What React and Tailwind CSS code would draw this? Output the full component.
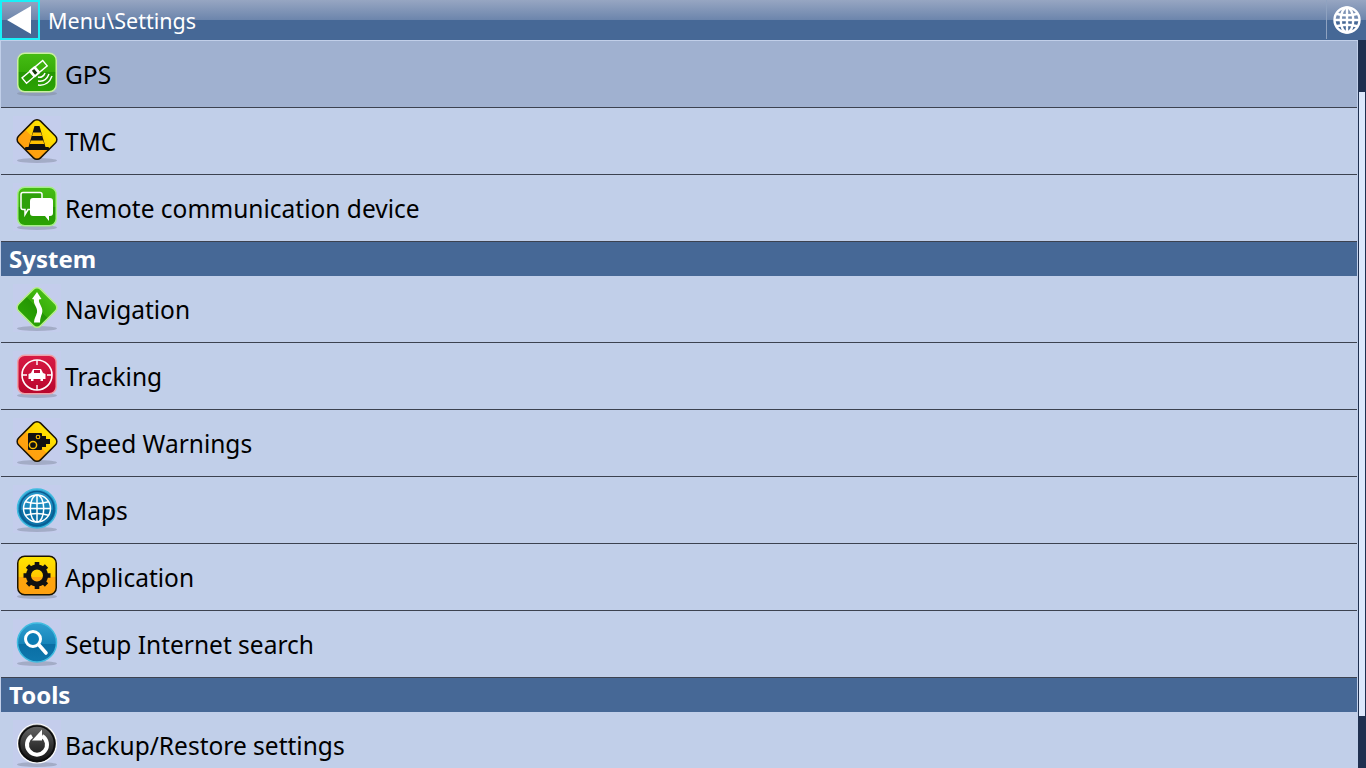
import React from "react";

const Frame = ({ children }) => (
  <svg width="48" height="48" viewBox="0 0 48 48" className="block">
    <defs>
      <linearGradient id="green" x1="0" y1="0" x2="0" y2="1">
        <stop offset="0" stopColor="#46bd14" />
        <stop offset="0.5" stopColor="#36ab08" />
        <stop offset="0.5" stopColor="#259604" />
        <stop offset="1" stopColor="#2ba404" />
      </linearGradient>
      <linearGradient id="yellow" x1="0" y1="0" x2="0" y2="1">
        <stop offset="0" stopColor="#ffe600" />
        <stop offset="0.55" stopColor="#ffc800" />
        <stop offset="0.55" stopColor="#ffa60c" />
        <stop offset="1" stopColor="#ffa010" />
      </linearGradient>
      <linearGradient id="red" x1="0" y1="0" x2="0" y2="1">
        <stop offset="0" stopColor="#d81a44" />
        <stop offset="1" stopColor="#b8062c" />
      </linearGradient>
      <linearGradient id="blue" x1="0" y1="0" x2="0" y2="1">
        <stop offset="0" stopColor="#2f9fd0" />
        <stop offset="0.55" stopColor="#1583b8" />
        <stop offset="0.55" stopColor="#0a6ea4" />
        <stop offset="1" stopColor="#0f78ae" />
      </linearGradient>
      <linearGradient id="dark" x1="0" y1="0" x2="0" y2="1">
        <stop offset="0" stopColor="#6a6a6a" />
        <stop offset="0.55" stopColor="#333" />
        <stop offset="1" stopColor="#111" />
      </linearGradient>
    </defs>
    <ellipse cx="24" cy="44.5" rx="20" ry="2.6" fill="#7d8498" opacity="0.45" />
    {children}
  </svg>
);

const RoundBox = ({ fill, stroke }) => (
  <rect x="4.75" y="4.25" width="38.5" height="38.5" rx="7" fill={fill} stroke={stroke} strokeWidth="1.5" />
);

const Diamond = ({ fill, stroke }) => (
  <rect x="8.5" y="8" width="31" height="31" rx="5" transform="rotate(45 24 23.5)" fill={fill} stroke={stroke} strokeWidth="1.5" />
);

const Globe = ({ cx, cy, r, color, sw }) => (
  <g fill="none" stroke={color} strokeWidth={sw}>
    <circle cx={cx} cy={cy} r={r} />
    <ellipse cx={cx} cy={cy} rx={r * 0.5} ry={r} />
    <path d={`M${cx} ${cy - r}V${cy + r}M${cx - r} ${cy}H${cx + r}`} />
    <path d={`M${cx - r * 0.85} ${cy - r * 0.5}Q${cx} ${cy - r * 0.25} ${cx + r * 0.85} ${cy - r * 0.5}M${cx - r * 0.85} ${cy + r * 0.5}Q${cx} ${cy + r * 0.25} ${cx + r * 0.85} ${cy + r * 0.5}`} />
  </g>
);

const GpsIcon = () => (
  <Frame>
    <RoundBox fill="url(#green)" stroke="#c9f0a0" />
    <g transform="rotate(-40 22 22.5)">
      <rect x="8" y="19" width="10" height="7" fill="none" stroke="#fff" strokeWidth="1.4" />
      <rect x="18" y="18" width="7" height="9" fill="#fff" />
      <rect x="20" y="20" width="3" height="5" fill="#14380a" />
      <rect x="25" y="19" width="10" height="7" fill="none" stroke="#fff" strokeWidth="1.4" />
    </g>
    <path d="M25 28c3 1 6-1 7-4M25 32c5 1 9-2 11-7M25 36c7 1 12-3 14-9" fill="none" stroke="#fff" strokeWidth="1.5" />
  </Frame>
);

const TmcIcon = () => (
  <Frame>
    <Diamond fill="url(#yellow)" stroke="#1c1400" />
    <path d="M21.5 10h5l6 21h-17z" fill="#111" />
    <path d="M20 16.5h8l1 3.5h-10zM17.8 24.5h12.4l1 3.5h-14.4z" fill="#ffc000" />
    <rect x="12" y="31" width="24" height="3" rx="1" fill="#111" />
  </Frame>
);

const RemoteIcon = () => (
  <Frame>
    <RoundBox fill="url(#green)" stroke="#a6ee88" />
    <path d="M10 9.5h17a2 2 0 0 1 2 2v13a2 2 0 0 1-2 2H15l-3 5v-5h-2a2 2 0 0 1-2-2v-13a2 2 0 0 1 2-2z" fill="#2ea10a" stroke="#fff" strokeWidth="1.5" />
    <path d="M20 15h17a3 3 0 0 1 3 3v12a3 3 0 0 1-3 3h-1v5l-4-5H20a3 3 0 0 1-3-3V18a3 3 0 0 1 3-3z" fill="#fff" />
  </Frame>
);

const NavIcon = () => (
  <Frame>
    <Diamond fill="url(#green)" stroke="#b5ee88" />
    <path d="M24 8l4.5 7-2.5.5c-1 4 5 8 3 14-1 3-2 5-2 9h-6c0-4 2-6 3-10 1-5-4-8-3-13l-2-.5z" fill="#fff" />
  </Frame>
);

const TrackIcon = () => (
  <Frame>
    <RoundBox fill="url(#red)" stroke="#f0a0a8" />
    <circle cx="24" cy="24" r="15" fill="none" stroke="#fff" strokeWidth="1.6" />
    <path d="M24 9v5M24 34v5M9 24h5M34 24h5" stroke="#fff" strokeWidth="1.4" />
    <path d="M15.5 28v-5l2.5-1 2-4h8l2 4 2.5 1v5h-2.5v2h-2.5v-2h-7v2h-2.5v-2z" fill="#fff" />
    <rect x="21" y="19" width="6" height="3" fill="#c0103a" />
  </Frame>
);

const SpeedIcon = () => (
  <Frame>
    <Diamond fill="url(#yellow)" stroke="#1c1400" />
    <rect x="15" y="15" width="14" height="17" rx="1" fill="#111" />
    <path d="M29 18h4v3h4v5h-4v3h-4z" fill="#111" />
    <circle cx="20" cy="27" r="3.6" fill="none" stroke="#ffc000" strokeWidth="1.5" />
    <circle cx="25" cy="19" r="1.8" fill="none" stroke="#ffc000" strokeWidth="1.1" />
  </Frame>
);

const MapsIcon = () => (
  <Frame>
    <circle cx="24" cy="23.5" r="19.5" fill="url(#blue)" stroke="#42bce0" strokeWidth="1.5" />
    <circle cx="24" cy="23.5" r="17" fill="none" stroke="#0a5c90" strokeWidth="1.5" />
    <Globe cx={24} cy={23.5} r={13.5} color="#fff" sw={1.5} />
  </Frame>
);

const AppIcon = () => (
  <Frame>
    <RoundBox fill="url(#yellow)" stroke="#1c1400" />
    <circle cx="24" cy="23.5" r="8.5" fill="none" stroke="#111" strokeWidth="5" />
    <g stroke="#111" strokeWidth="4.6">
      <path d="M24 10v6M24 31v6M10.5 23.5h6M31.5 23.5h6M14.5 14l4 4M29.5 29l4 4M33.5 14l-4 4M18.5 29l-4 4" />
    </g>
  </Frame>
);

const SearchIcon = () => (
  <Frame>
    <circle cx="24" cy="23.5" r="19.5" fill="url(#blue)" stroke="#42bce0" strokeWidth="1.5" />
    <circle cx="20" cy="20" r="7.5" fill="#0c7cb4" stroke="#fff" strokeWidth="3" />
    <path d="M26 26l7 8" stroke="#fff" strokeWidth="3.6" strokeLinecap="round" />
  </Frame>
);

const BackupIcon = () => (
  <Frame>
    <circle cx="24" cy="23.5" r="19.5" fill="url(#dark)" stroke="#fff" strokeWidth="1.2" />
    <circle cx="24" cy="23.5" r="17.5" fill="none" stroke="#0c0c0c" strokeWidth="1.5" />
    <path d="M19 16a10 10 0 1 0 10 0" fill="none" stroke="#fff" strokeWidth="4" />
    <path d="M29 9.5v11h-10z" fill="#fff" />
  </Frame>
);

const Row = ({ icon, label, active }) => (
  <div className={`flex h-[67px] ml-px border-b border-[#3c4250] ${active ? "bg-[#a0b1d0]" : "bg-[#c1cfe9]"}`}>
    <div className={`ml-[12px] mt-[8px] w-[48px] h-[48px] shrink-0 ${active ? "" : "bg-[#c4cdec]"}`}>{icon}</div>
    <span className="ml-[4px] text-[24.5px] leading-[68px] text-black whitespace-nowrap">{label}</span>
  </div>
);

const Section = ({ title }) => (
  <div className="h-[34px] ml-px bg-[#466896] text-white font-bold text-[24px] leading-[33px] pl-[8px]">
    {title}
  </div>
);

export default function App() {
  return (
    <div className="w-[1366px] h-[768px] overflow-hidden bg-[#c1cfe9]" style={{ fontFamily: '"Noto Sans", sans-serif' }}>
      <header className="flex h-[40px] bg-[linear-gradient(#97a6c2_0,#6c85ac_50%,#466896_50%,#466896_100%)]">
        <button className="w-[40px] h-[40px] border-2 border-[#19f0f8] flex items-center justify-center">
          <svg width="26" height="28" viewBox="0 0 26 28">
            <path d="M0 14L24 0v28z" fill="#fff" />
          </svg>
        </button>
        <div className="ml-[8px] text-white text-[21.5px] leading-[42px] flex-1">Menu\Settings</div>
        <div className="w-[40px] h-[39px] border-l border-[#8fa2c0] flex items-center justify-center">
          <svg width="30" height="30" viewBox="0 0 30 30">
            <Globe cx={15} cy={15} r={12.5} color="#fff" sw={2.4} />
          </svg>
        </div>
      </header>
      <div className="flex h-[728px]">
        <div className="flex-1 min-w-0 overflow-hidden border-t border-[#c1cfe9]">
          <Row active icon={<GpsIcon />} label="GPS" />
          <Row icon={<TmcIcon />} label="TMC" />
          <Row icon={<RemoteIcon />} label="Remote communication device" />
          <Section title="System" />
          <Row icon={<NavIcon />} label="Navigation" />
          <Row icon={<TrackIcon />} label="Tracking" />
          <Row icon={<SpeedIcon />} label="Speed Warnings" />
          <Row icon={<MapsIcon />} label="Maps" />
          <Row icon={<AppIcon />} label="Application" />
          <Row icon={<SearchIcon />} label="Setup Internet search" />
          <Section title="Tools" />
          <Row icon={<BackupIcon />} label="Backup/Restore settings" />
        </div>
        <div className="w-[8px] ml-px bg-[#1f3050] pt-[52px] shrink-0">
          <div className="ml-px w-[6px] h-[624px] bg-[#dce8fc]" />
        </div>
      </div>
    </div>
  );
}
